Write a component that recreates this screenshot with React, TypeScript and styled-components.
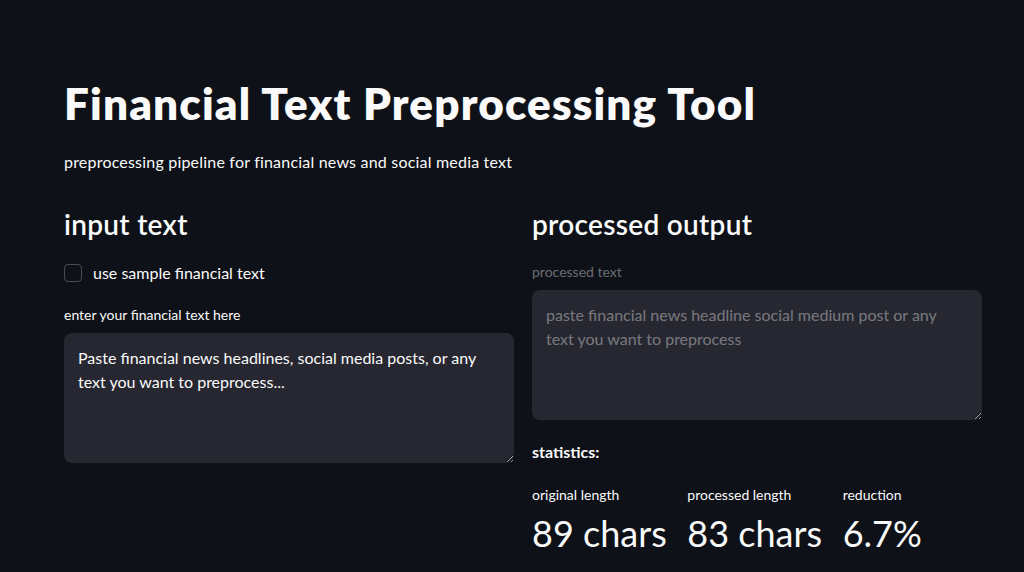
import React from 'react';
import styled, { createGlobalStyle } from 'styled-components';

const GlobalStyle = createGlobalStyle`
  html, body {
    margin: 0;
    padding: 0;
    background: #0e1117;
    color: #fafafa;
    font-family: Lato, "Noto Sans", sans-serif;
  }
  * {
    box-sizing: border-box;
  }
`;

const Page = styled.div`
  min-height: 572px;
  padding: 72px 42px 40px 64px;
`;

const Title = styled.h1`
  margin: 0;
  font-size: 44px;
  font-weight: 800;
  line-height: 62px;
  letter-spacing: 1.15px;
`;

const Subtitle = styled.p`
  margin: 16px 0 0;
  font-size: 16px;
  line-height: 24px;
  letter-spacing: 0.2px;
`;

const Columns = styled.div`
  display: grid;
  grid-template-columns: 450px 450px;
  column-gap: 18px;
  margin-top: 30px;
`;

const Column = styled.div`
  display: flex;
  flex-direction: column;
`;

const SectionTitle = styled.h3`
  margin: 0;
  font-size: 28px;
  font-weight: 600;
  line-height: 40px;
  letter-spacing: 0.3px;
`;

const CheckRow = styled.label`
  display: flex;
  align-items: center;
  gap: 11px;
  margin-top: 17px;
  font-size: 16px;
  line-height: 24px;
`;

const Box = styled.span`
  width: 18px;
  height: 18px;
  border: 1px solid rgba(250, 250, 250, 0.25);
  border-radius: 4px;
`;

const FieldLabel = styled.div<{ $disabled?: boolean }>`
  font-size: 14px;
  line-height: 20px;
  color: ${({ $disabled }) => ($disabled ? 'rgba(250, 250, 250, 0.4)' : '#fafafa')};
  margin-top: ${({ $disabled }) => ($disabled ? '18px' : '20px')};
  margin-bottom: 8px;
`;

const TextArea = styled.textarea<{ $disabled?: boolean }>`
  width: 100%;
  height: 130px;
  border: none;
  border-radius: 8px;
  background: #262730;
  color: ${({ $disabled }) => ($disabled ? 'rgba(250, 250, 250, 0.4)' : '#fafafa')};
  font-family: Lato, "Noto Sans", sans-serif;
  font-size: 16px;
  line-height: 24px;
  padding: 13px 14px;
  resize: vertical;
  outline: none;
`;

const StatsHeading = styled.div`
  font-size: 16px;
  font-weight: 700;
  line-height: 24px;
  margin-top: 20px;
`;

const Metrics = styled.div`
  display: grid;
  grid-template-columns: repeat(3, 1fr);
  column-gap: 16px;
  margin-top: 21px;
`;

const Metric = styled.div`
  display: flex;
  flex-direction: column;
`;

const MetricLabel = styled.div`
  font-size: 14px;
  line-height: 20px;
`;

const MetricValue = styled.div`
  font-size: 36px;
  line-height: 48px;
  margin-top: 4px;
`;

const stats = [
  { label: 'original length', value: '89 chars' },
  { label: 'processed length', value: '83 chars' },
  { label: 'reduction', value: '6.7%' },
];

const App = () => {
  return (
    <>
      <GlobalStyle />
      <Page>
        <Title>Financial Text Preprocessing Tool</Title>
        <Subtitle>preprocessing pipeline for financial news and social media text</Subtitle>
        <Columns>
          <Column>
            <SectionTitle>input text</SectionTitle>
            <CheckRow>
              <Box />
              use sample financial text
            </CheckRow>
            <FieldLabel>enter your financial text here</FieldLabel>
            <TextArea defaultValue="Paste financial news headlines, social media posts, or any text you want to preprocess..." />
          </Column>
          <Column>
            <SectionTitle>processed output</SectionTitle>
            <FieldLabel $disabled>processed text</FieldLabel>
            <TextArea
              $disabled
              disabled
              defaultValue="paste financial news headline social medium post or any text you want to preprocess"
            />
            <StatsHeading>statistics:</StatsHeading>
            <Metrics>
              {stats.map((s) => (
                <Metric key={s.label}>
                  <MetricLabel>{s.label}</MetricLabel>
                  <MetricValue>{s.value}</MetricValue>
                </Metric>
              ))}
            </Metrics>
          </Column>
        </Columns>
      </Page>
    </>
  );
};

export default App;
